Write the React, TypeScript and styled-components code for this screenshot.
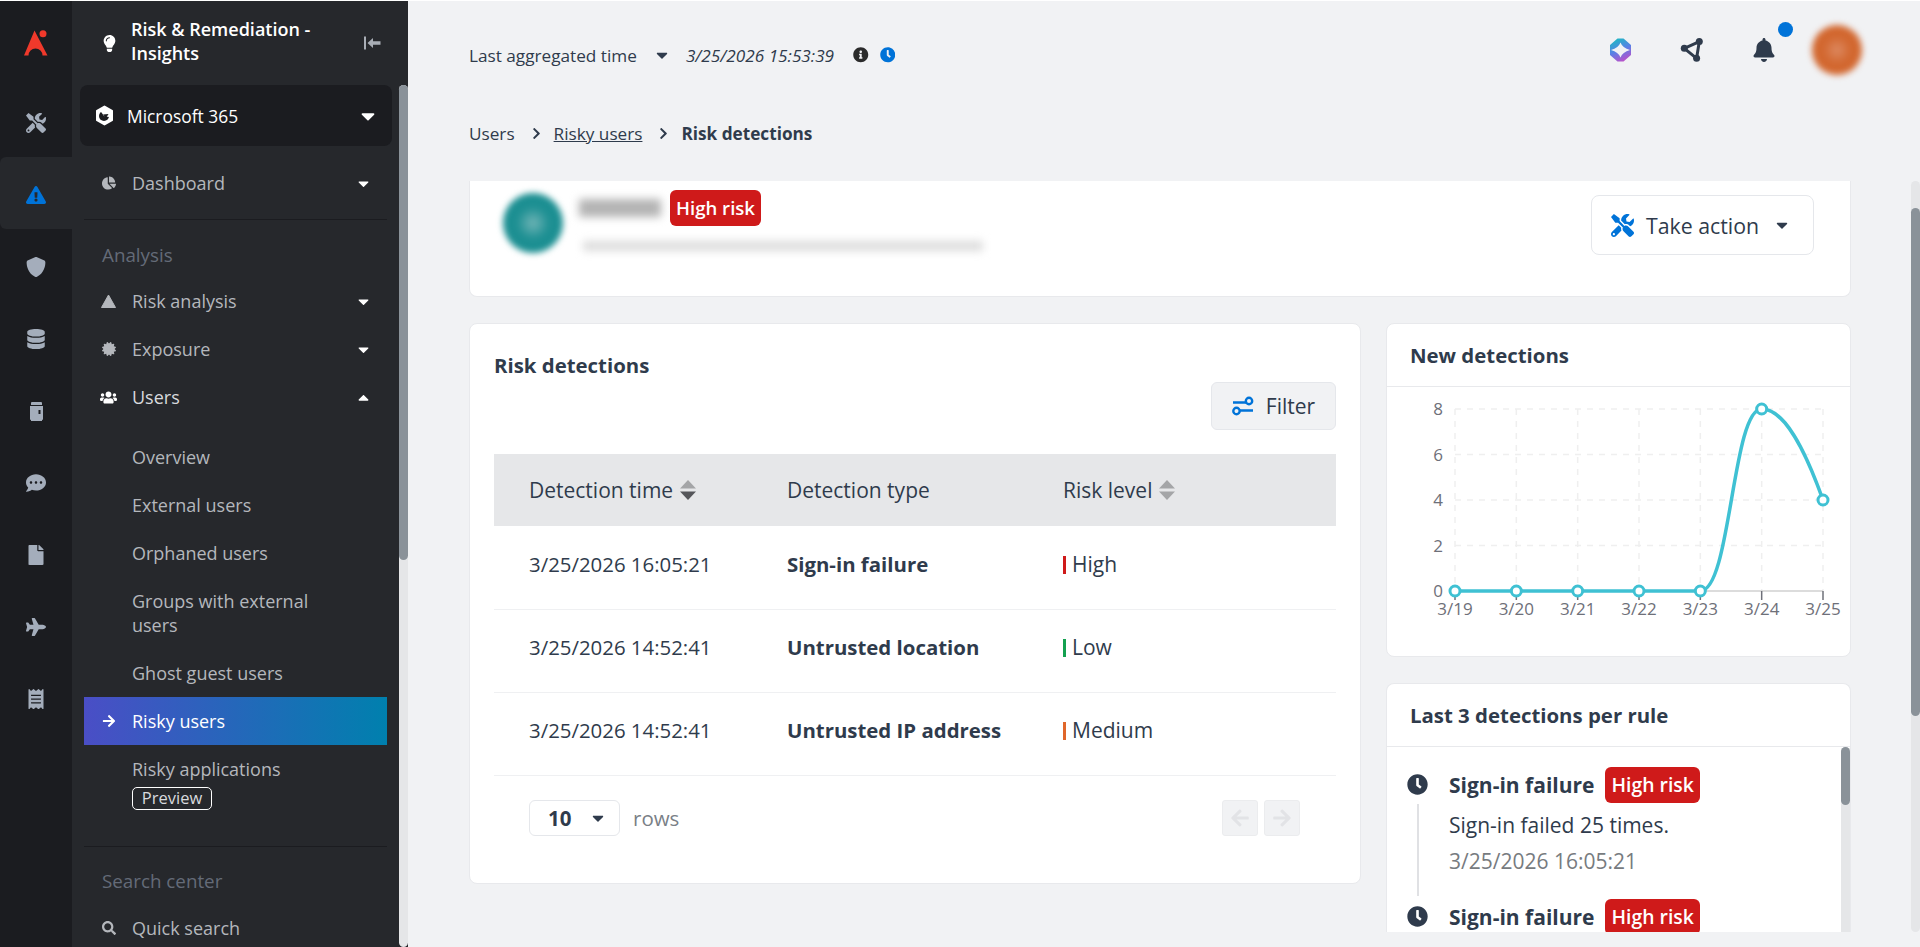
import styled, { createGlobalStyle } from "styled-components";
import {
  FaArrowLeft,
  FaArrowRight,
  FaBell,
  FaCaretDown,
  FaCaretUp,
  FaCertificate,
  FaChartPie,
  FaChevronRight,
  FaClock,
  FaCommentDots,
  FaDatabase,
  FaExclamationTriangle,
  FaFile,
  FaInfoCircle,
  FaLightbulb,
  FaPlane,
  FaReceipt,
  FaSearch,
  FaTools,
  FaUsers,
} from "react-icons/fa";
import { FaShield } from "react-icons/fa6";

const GlobalStyle = createGlobalStyle`
  html, body {
    margin: 0;
    padding: 0;
    height: 100%;
    overflow: hidden;
    background: #fff;
  }
  body {
    font-family: "Open Sans", "Noto Sans", "Liberation Sans", sans-serif;
    color: #2f3b4c;
  }
  * { box-sizing: border-box; }
`;

const Shell = styled.div`
  display: flex;
  height: 947px;
  padding-top: 1px;
`;

/* left icon rail */
const Rail = styled.nav`
  width: 72px;
  flex: none;
  background: #1b1c20;
  display: flex;
  flex-direction: column;
`;

const RailItem = styled.div<{ $active?: boolean }>`
  height: 72px;
  display: flex;
  align-items: center;
  justify-content: center;
  padding-top: 4px;
  color: #a4adbb;
  font-size: 20px;
  background: ${(p) => (p.$active ? "#26282c" : "transparent")};
  border-radius: ${(p) => (p.$active ? "6px 0 0 6px" : "0")};
`;

const RailLogo = styled(RailItem)`
  height: 84px;
  padding-top: 0;
`;

/* sidebar */
const Sidebar = styled.aside`
  width: 336px;
  flex: none;
  background: #26282c;
  display: flex;
  flex-direction: column;
  color: #b4b7bc;
  overflow: hidden;
`;

const SideHead = styled.div`
  height: 84px;
  flex: none;
  display: flex;
  align-items: center;
  padding: 0 26px 0 29px;
  color: #fff;
`;

const SideHeadTitle = styled.div`
  flex: 1;
  margin: -4px 0 0 13px;
  font-size: 18px;
  font-weight: 600;
  line-height: 24px;
`;

const SideBody = styled.div`
  flex: 1;
  display: flex;
  min-height: 0;
`;

const SideScroll = styled.div`
  flex: 1;
  min-width: 0;
  padding: 0 7px 0 8px;
  overflow: hidden;
`;

const ScrollTrack = styled.div<{ $w: number }>`
  width: ${(p) => p.$w}px;
  flex: none;
  background: #e5e6e8;
  border-radius: ${(p) => p.$w / 2}px;
`;

const ScrollThumb = styled.div<{ $top: number; $h: number }>`
  margin-top: ${(p) => p.$top}px;
  height: ${(p) => p.$h}px;
  background: #8a9299;
  border-radius: 5px;
`;

const TenantBox = styled.div`
  height: 61px;
  background: #1b1c20;
  border-radius: 8px;
  display: flex;
  align-items: center;
  padding: 0 13px 0 15px;
  color: #fff;
  font-size: 17.4px;
  margin-bottom: 13px;
`;

const TenantLabel = styled.span`
  flex: 1;
  margin-left: 13px;
`;

const NavGroup = styled.div<{ $border?: boolean }>`
  margin: 0 5px 0 4px;
  border-bottom: 1px solid ${(p) => (p.$border ? "#1b1c20" : "transparent")};
`;

const NavRow = styled.div<{ $light?: boolean; $active?: boolean }>`
  min-height: 48px;
  display: flex;
  align-items: center;
  font-size: 18px;
  line-height: 24px;
  color: ${(p) => (p.$active ? "#fff" : p.$light ? "#d8dade" : "#b4b7bc")};
  background: ${(p) =>
    p.$active ? "linear-gradient(90deg, #4a4ec6 0%, #0080ae 100%)" : "none"};
`;

const NavIcon = styled.span<{ $light?: boolean }>`
  width: 48px;
  flex: none;
  display: flex;
  justify-content: center;
  padding-left: 1px;
  font-size: 14px;
  color: ${(p) => (p.$light ? "#fff" : "#b4b7bc")};
`;

const NavLabel = styled.span`
  flex: 1;
`;

const NavCaret = styled.span`
  flex: none;
  width: 30px;
  margin-right: 9px;
  display: flex;
  justify-content: center;
  color: #fff;
  font-size: 17px;
`;

const NavSub = styled.div`
  padding: 12px 55px 12px 48px;
  font-size: 18px;
  line-height: 24px;
  color: #b4b7bc;
  min-height: 48px;
`;

const NavSubLast = styled(NavSub)`
  padding-bottom: 0;
  padding-right: 8px;
`;

const PreviewTag = styled.span`
  display: block;
  width: 80px;
  height: 23px;
  margin-top: 6px;
  border: 1px solid #fff;
  border-radius: 5px;
  color: #d8dade;
  font-size: 16.5px;
  line-height: 20px;
  text-align: center;
`;

const NavSpacer = styled.div<{ $h: number }>`
  height: ${(p) => p.$h}px;
`;

const NavSection = styled.div<{ $top: number }>`
  height: 57px;
  padding: ${(p) => p.$top}px 0 0 18px;
  font-size: 18.8px;
  line-height: 24px;
  color: #646b78;
`;

/* main column */
const Main = styled.main`
  flex: 1;
  min-width: 0;
  background: #f1f2f4;
  display: flex;
  flex-direction: column;
`;

const TopBar = styled.header`
  height: 108px;
  flex: none;
  display: flex;
  align-items: center;
  justify-content: space-between;
  padding: 0 51px 0 61px;
`;

const Aggregated = styled.div`
  display: flex;
  align-items: center;
  font-size: 17.2px;
  color: #2f3b4c;
`;

const AggCaret = styled.span`
  display: flex;
  margin: 0 15px 0 16px;
  font-size: 18px;
`;

const AggTime = styled.em`
  margin-right: 19px;
`;

const DotIcon = styled.span<{ $color: string }>`
  display: flex;
  margin-right: 11px;
  font-size: 15.5px;
  color: ${(p) => p.$color};
`;

const TopIcons = styled.div`
  display: flex;
  align-items: center;
  margin-bottom: 10px;
  color: #2f3b4c;
`;

const TopIcon = styled.span<{ $gap: number }>`
  display: flex;
  position: relative;
  font-size: 24px;
  margin-right: ${(p) => p.$gap}px;
`;

const BellDot = styled.span`
  position: absolute;
  top: -16px;
  left: 26px;
  width: 15px;
  height: 15px;
  border-radius: 50%;
  background: #0073d8;
`;

const AvatarWrap = styled.div`
  width: 64px;
  height: 56px;
  display: flex;
  align-items: center;
  justify-content: center;
  margin-left: -6px;
`;

const BlurDisc = styled.div<{ $size: number; $color: string; $core: string }>`
  width: ${(p) => p.$size}px;
  height: ${(p) => p.$size}px;
  border-radius: 50%;
  background: radial-gradient(circle, ${(p) => p.$core} 0%, ${(p) => p.$color} 40%);
  filter: blur(3px);
`;

const Crumbs = styled.div`
  height: 72px;
  flex: none;
  display: flex;
  align-items: center;
  padding: 0 0 24px 61px;
  font-size: 17.2px;
  color: #2f3b4c;
`;

const CrumbLink = styled.a`
  color: #2f3b4c;
  text-decoration: underline;
`;

const CrumbSep = styled.span`
  display: flex;
  margin: 0 11px 0 15px;
  font-size: 13px;
`;

const CrumbNow = styled.strong`
  font-weight: 700;
`;

const ContentArea = styled.div`
  height: 751px;
  flex: none;
  display: flex;
  overflow: hidden;
`;

const Content = styled.div`
  flex: 1;
  min-width: 0;
  padding: 0 60px 0 61px;
  overflow: hidden;
`;

const Card = styled.section`
  background: #fff;
  border: 1px solid #e8e9ec;
  border-radius: 8px;
`;

const UserCard = styled(Card)`
  height: 116px;
  border-top: 0;
  border-radius: 0 0 8px 8px;
  display: flex;
  align-items: flex-start;
  padding: 9px 36px 0 30px;
`;

const UserAvatar = styled.div`
  width: 66px;
  height: 66px;
  display: flex;
  align-items: center;
  justify-content: center;
`;

const UserInfo = styled.div`
  flex: 1;
  margin-left: 13px;
`;

const UserNameRow = styled.div`
  display: flex;
  align-items: center;
`;

const BlurBar = styled.div<{ $w: number; $h: number; $color: string }>`
  width: ${(p) => p.$w}px;
  height: ${(p) => p.$h}px;
  background: ${(p) => p.$color};
  filter: blur(4px);
`;

const RiskBadge = styled.span<{ $size: number }>`
  display: inline-block;
  background: #cf1a1a;
  color: #fff;
  font-size: ${(p) => p.$size}px;
  font-weight: 600;
  line-height: 36px;
  height: 36px;
  padding: 0 6px;
  border-radius: 6px;
  white-space: nowrap;
`;

const UserNameBadge = styled(RiskBadge)`
  margin-left: 9px;
`;

const UserMail = styled.div`
  margin: 15px 0 0 4px;
`;

const ActionButton = styled.button`
  margin-top: 5px;
  width: 223px;
  height: 60px;
  display: flex;
  align-items: center;
  padding: 0 19px;
  background: #fff;
  border: 1px solid #e5e7eb;
  border-radius: 8px;
  font: inherit;
  font-size: 21.3px;
  color: #2f3b4c;
`;

const ActionIcon = styled.span`
  display: flex;
  color: #0073d8;
  font-size: 23px;
  margin-right: 12px;
`;

const ActionCaret = styled.span`
  display: flex;
  margin-left: 14px;
  font-size: 18px;
`;

const Columns = styled.div`
  display: grid;
  grid-template-columns: 892px 465px;
  gap: 25px;
  margin-top: 26px;
  align-items: start;
`;

const DetectionsCard = styled(Card)`
  height: 561px;
  padding: 28px 24px 0;
`;

const CardHeading = styled.h2`
  margin: 0;
  font-size: 20.4px;
  line-height: 26px;
  font-weight: 700;
  color: #2f3b4c;
`;

const FilterRow = styled.div`
  display: flex;
  justify-content: flex-end;
  margin-top: 4px;
`;

const FilterButton = styled.button`
  width: 125px;
  height: 48px;
  display: flex;
  align-items: center;
  justify-content: center;
  gap: 12px;
  background: #f1f2f4;
  border: 1px solid #e5e7eb;
  border-radius: 6px;
  font: inherit;
  font-size: 21px;
  color: #2f3b4c;
`;

const Table = styled.table`
  width: 100%;
  margin-top: 24px;
  border-collapse: collapse;
  table-layout: fixed;
  font-size: 21px;
`;

const Th = styled.th<{ $w?: number }>`
  height: 72px;
  background: #e6e7e9;
  text-align: left;
  font-weight: 400;
  padding: 0 0 0 35px;
  width: ${(p) => (p.$w ? `${p.$w}px` : "auto")};
`;

const ThInner = styled.span`
  display: inline-flex;
  align-items: center;
  gap: 6px;
`;

const Td = styled.td<{ $strong?: boolean; $size?: number }>`
  height: 83px;
  padding: 0 0 7px 35px;
  border-bottom: 1px solid #eff0f2;
  font-weight: ${(p) => (p.$strong ? 700 : 400)};
  font-size: ${(p) => p.$size ?? 21}px;
`;

const LevelBar = styled.span<{ $color: string }>`
  display: inline-block;
  width: 3px;
  height: 18px;
  margin-right: 6px;
  vertical-align: -2px;
  background: ${(p) => p.$color};
`;

const TableFoot = styled.div`
  display: flex;
  align-items: center;
  padding: 24px 36px 0 35px;
`;

const RowsSelect = styled.div`
  width: 91px;
  height: 36px;
  display: flex;
  align-items: center;
  padding: 0 12px 0 18px;
  border: 1px solid #e5e7eb;
  border-radius: 6px;
  font-size: 20.5px;
  font-weight: 700;
`;

const RowsValue = styled.span`
  flex: 1;
`;

const RowsCaret = styled.span`
  display: flex;
  font-size: 18px;
`;

const RowsLabel = styled.span`
  flex: 1;
  margin-left: 13px;
  font-size: 20.5px;
  color: #7a7f87;
`;

const PageButton = styled.span`
  width: 36px;
  height: 36px;
  margin-left: 6px;
  display: flex;
  align-items: center;
  justify-content: center;
  background: #f1f2f4;
  border: 1px solid #ebecee;
  border-radius: 3px;
  color: #e2e3e6;
  font-size: 20px;
`;

const SideCards = styled.div`
  display: flex;
  flex-direction: column;
  gap: 26px;
`;

const SideCardHead = styled.div`
  height: 63px;
  padding: 18px 23px 0;
  border-bottom: 1px solid #e8e9ec;
`;

const ChartCard = styled(Card)`
  height: 334px;
`;

const ChartSvg = styled.svg`
  display: block;
`;

const TimelineCard = styled(Card)`
  height: 300px;
  border-bottom: 0;
  border-radius: 8px 8px 0 0;
  display: flex;
  flex-direction: column;
`;

const TimelineBody = styled.div`
  flex: 1;
  display: flex;
  min-height: 0;
  overflow: hidden;
`;

const TimelineList = styled.div`
  flex: 1;
  padding: 27px 0 0 20px;
  overflow: hidden;
`;

const TimelineItem = styled.div`
  display: grid;
  grid-template-columns: 21px 1fr;
  column-gap: 21px;
  height: 132px;
`;

const TimelineMark = styled.div`
  display: flex;
  flex-direction: column;
  align-items: center;
  font-size: 21px;
  color: #2f3b4c;
`;

const TimelineLine = styled.div`
  width: 2px;
  height: 92px;
  margin-top: 9px;
  background: #e0e1e4;
`;

const TimelineTitle = styled.div`
  display: flex;
  align-items: center;
  gap: 11px;
  margin-top: -7px;
  font-size: 21px;
  font-weight: 700;
`;

const TimelineText = styled.div`
  margin-top: 9px;
  font-size: 21px;
  line-height: 26px;
`;

const TimelineDate = styled(TimelineText)`
  margin-top: 10px;
  color: #777b80;
`;

const Logo = () => (
  <svg width="24" height="26" viewBox="0 0 24 26">
    <path d="M10.500 0.500 0 25.500h4.500a7 7 0 0 1 14 0H23.500z" fill="#f0392b" />
    <circle cx="19" cy="3.800" r="3.500" fill="#f0392b" />
  </svg>
);

const HexIcon = () => (
  <svg width="19" height="21" viewBox="0 0 19 21">
    <path
      d="M9.500 1.500 17 5.800v9.400l-7.500 4.300L2 15.200V5.800z"
      fill="#fff"
      stroke="#fff"
      strokeWidth="2"
      strokeLinejoin="round"
    />
    <circle cx="9" cy="11" r="5" fill="#1b1c20" />
    <path d="M9 11 5 5.500h9.500L17 10.500l-3.500 1.500z" fill="#fff" />
    <path d="M8 9.500 13.500 9 11 13z" fill="#1b1c20" />
  </svg>
);

const CollapseIcon = () => (
  <svg width="18" height="14" viewBox="0 0 18 14" fill="#a9aeb6">
    <rect x="0" y="0.500" width="2" height="13" />
    <path d="M3.500 7 9 2v3.200h7.500v3.600H9V12z" />
  </svg>
);

const TriangleIcon = () => (
  <svg width="15" height="14" viewBox="0 0 15 14" fill="#b4b7bc">
    <path d="M7.500 1 14.500 13.500H0.500z" strokeLinejoin="round" stroke="#b4b7bc" />
  </svg>
);

const BookIcon = () => (
  <svg width="13" height="19" viewBox="0 0 13 19" fill="#a4adbb">
    <path d="M2 0h9a1 1 0 0 1 1 1v2H1V1a1 1 0 0 1 1-1z" />
    <path d="M0 4h13v13a1 1 0 0 1-1 1v1H1v-1a1 1 0 0 1-1-1z" />
    <rect x="8.500" y="8" width="2" height="4" fill="#1b1c20" />
  </svg>
);

const StarIcon = () => (
  <svg width="21" height="24" viewBox="0 0 21 24">
    <defs>
      <linearGradient id="starGrad" x1="0.300" y1="0" x2="0.700" y2="1">
        <stop offset="0" stopColor="#1fb8c4" />
        <stop offset="0.500" stopColor="#5a80e6" />
        <stop offset="1" stopColor="#c04fc8" />
      </linearGradient>
    </defs>
    <path
      fill="url(#starGrad)"
      fillRule="evenodd"
      d="M7.500 0.500h6L21 7v10l-7.500 6.500h-6L0 17V7zM10.500 4.500Q12.500 10 20 12 12.500 14 10.500 19.500 8.500 14 1 12 8.500 10 10.500 4.500z"
    />
  </svg>
);

const GraphIcon = () => (
  <svg width="24" height="24" viewBox="0 0 24 24" fill="none" stroke="#2f3b4c" strokeWidth="3">
    <path d="M4.300 10.300 19.300 3.600 16.600 20.300z" strokeLinejoin="round" />
    <circle cx="4.300" cy="10.300" r="3.500" fill="#2f3b4c" stroke="none" />
    <circle cx="19.300" cy="3.600" r="3.500" fill="#2f3b4c" stroke="none" />
    <circle cx="16.600" cy="20.300" r="3.500" fill="#2f3b4c" stroke="none" />
  </svg>
);

const FilterIcon = () => (
  <svg width="22" height="20" viewBox="0 0 22 20" fill="none" stroke="#0073d8" strokeWidth="2.400">
    <path d="M1 6.500h13M8 14.500h13" />
    <circle cx="17" cy="5" r="3.200" />
    <circle cx="4.500" cy="15" r="3.200" />
  </svg>
);

const SortIcon = ({ active }: { active?: boolean }) => (
  <svg width="18" height="22" viewBox="0 0 18 22">
    <path d="M9 1 17 9.500H1z" fill="#a4a5a7" />
    <path d="M9 21 1 12.500h16z" fill={active ? "#55565a" : "#a4a5a7"} />
  </svg>
);

const chartX = [68, 129.330, 190.670, 252, 313.330, 374.670, 436];
const chartY = [22, 67.500, 113, 158.500, 204];

const DetectionChart = () => (
  <ChartSvg width="463" height="270" viewBox="0 0 463 270">
    {chartY.slice(0, 4).map((y) => (
      <line key={y} x1="68" x2="436" y1={y} y2={y} stroke="#efefef" strokeWidth="1.500" strokeDasharray="6 6" />
    ))}
    {chartX.map((x) => (
      <line key={x} x1={x} x2={x} y1="22" y2="204" stroke="#efefef" strokeWidth="1.500" strokeDasharray="6 6" />
    ))}
    <line x1="68" x2="436" y1="204" y2="204" stroke="#dcdcdc" strokeWidth="2" />
    {chartX.map((x) => (
      <line key={x} x1={x} x2={x} y1="204" y2="213" stroke="#6e7079" strokeWidth="1.500" />
    ))}
    {["8", "6", "4", "2", "0"].map((t, i) => (
      <text key={t} x="56" y={chartY[i] + 6} textAnchor="end" fontSize="17" fill="#6e7079">
        {t}
      </text>
    ))}
    {["3/19", "3/20", "3/21", "3/22", "3/23", "3/24", "3/25"].map((t, i) => (
      <text key={t} x={chartX[i]} y="228" textAnchor="middle" fontSize="17" fill="#6e7079">
        {t}
      </text>
    ))}
    <path
      d="M68 204H313.330C344 204 345 22 374.670 22C397 22 417 60 436 113"
      fill="none"
      stroke="#3fc1d3"
      strokeWidth="3.500"
    />
    {[204, 204, 204, 204, 204, 22, 113].map((y, i) => (
      <circle key={i} cx={chartX[i]} cy={y} r="5" fill="#fff" stroke="#3fc1d3" strokeWidth="3" />
    ))}
  </ChartSvg>
);

const detections = [
  { time: "3/25/2026 16:05:21", type: "Sign-in failure", level: "High", color: "#cf1a1a" },
  { time: "3/25/2026 14:52:41", type: "Untrusted location", level: "Low", color: "#14a150" },
  { time: "3/25/2026 14:52:41", type: "Untrusted IP address", level: "Medium", color: "#e0662a" },
];

const subItems = [
  "Overview",
  "External users",
  "Orphaned users",
  "Groups with external users",
  "Ghost guest users",
];

const App = () => {
  return (
    <>
      <GlobalStyle />
      <Shell>
        <Rail>
          <RailLogo>
            <Logo />
          </RailLogo>
          <RailItem>
            <FaTools />
          </RailItem>
          <RailItem $active>
            <FaExclamationTriangle color="#0073d8" />
          </RailItem>
          <RailItem>
            <FaShield />
          </RailItem>
          <RailItem>
            <FaDatabase />
          </RailItem>
          <RailItem>
            <BookIcon />
          </RailItem>
          <RailItem>
            <FaCommentDots />
          </RailItem>
          <RailItem>
            <FaFile />
          </RailItem>
          <RailItem>
            <FaPlane />
          </RailItem>
          <RailItem>
            <FaReceipt />
          </RailItem>
        </Rail>

        <Sidebar>
          <SideHead>
            <FaLightbulb size={17} />
            <SideHeadTitle>Risk &amp; Remediation - Insights</SideHeadTitle>
            <CollapseIcon />
          </SideHead>
          <SideBody>
            <SideScroll>
              <TenantBox>
                <HexIcon />
                <TenantLabel>Microsoft 365</TenantLabel>
                <FaCaretDown size={22} />
              </TenantBox>
              <NavGroup $border>
                <NavRow>
                  <NavIcon>
                    <FaChartPie />
                  </NavIcon>
                  <NavLabel>Dashboard</NavLabel>
                  <NavCaret>
                    <FaCaretDown />
                  </NavCaret>
                </NavRow>
                <NavSpacer $h={12} />
              </NavGroup>
              <NavGroup>
                <NavSection $top={23}>Analysis</NavSection>
                <NavRow>
                  <NavIcon>
                    <TriangleIcon />
                  </NavIcon>
                  <NavLabel>Risk analysis</NavLabel>
                  <NavCaret>
                    <FaCaretDown />
                  </NavCaret>
                </NavRow>
                <NavRow>
                  <NavIcon>
                    <FaCertificate />
                  </NavIcon>
                  <NavLabel>Exposure</NavLabel>
                  <NavCaret>
                    <FaCaretDown />
                  </NavCaret>
                </NavRow>
                <NavRow $light>
                  <NavIcon $light>
                    <FaUsers size={17} />
                  </NavIcon>
                  <NavLabel>Users</NavLabel>
                  <NavCaret>
                    <FaCaretUp />
                  </NavCaret>
                </NavRow>
                <NavSpacer $h={12} />
                {subItems.map((s) => (
                  <NavSub key={s}>{s}</NavSub>
                ))}
                <NavRow $active>
                  <NavIcon $light>
                    <FaArrowRight />
                  </NavIcon>
                  <NavLabel>Risky users</NavLabel>
                </NavRow>
                <NavSubLast>
                  Risky applications
                  <PreviewTag>Preview</PreviewTag>
                </NavSubLast>
              </NavGroup>
              <NavGroup $border>
                <NavSpacer $h={35} />
              </NavGroup>
              <NavGroup>
                <NavSection $top={22}>Search center</NavSection>
                <NavRow>
                  <NavIcon>
                    <FaSearch />
                  </NavIcon>
                  <NavLabel>Quick search</NavLabel>
                </NavRow>
              </NavGroup>
            </SideScroll>
            <ScrollTrack $w={9}>
              <ScrollThumb $top={0} $h={475} />
            </ScrollTrack>
          </SideBody>
        </Sidebar>

        <Main>
          <TopBar>
            <Aggregated>
              Last aggregated time
              <AggCaret>
                <FaCaretDown />
              </AggCaret>
              <AggTime>3/25/2026 15:53:39</AggTime>
              <DotIcon $color="#2b2b2b">
                <FaInfoCircle />
              </DotIcon>
              <DotIcon $color="#0073d8">
                <FaClock />
              </DotIcon>
            </Aggregated>
            <TopIcons>
              <TopIcon $gap={49}>
                <StarIcon />
              </TopIcon>
              <TopIcon $gap={48}>
                <GraphIcon />
              </TopIcon>
              <TopIcon $gap={35}>
                <FaBell />
                <BellDot />
              </TopIcon>
              <AvatarWrap>
                <BlurDisc $size={50} $color="#d2672f" $core="#dd8a62" />
              </AvatarWrap>
            </TopIcons>
          </TopBar>

          <Crumbs>
            Users
            <CrumbSep>
              <FaChevronRight />
            </CrumbSep>
            <CrumbLink>Risky users</CrumbLink>
            <CrumbSep>
              <FaChevronRight />
            </CrumbSep>
            <CrumbNow>Risk detections</CrumbNow>
          </Crumbs>

          <ContentArea>
            <Content>
              <UserCard>
                <UserAvatar>
                  <BlurDisc $size={60} $color="#1c8f92" $core="#6fb4b6" />
                </UserAvatar>
                <UserInfo>
                  <UserNameRow>
                    <BlurBar $w={82} $h={18} $color="#b4b4b4" />
                    <UserNameBadge $size={18.6}>High risk</UserNameBadge>
                  </UserNameRow>
                  <UserMail>
                    <BlurBar $w={400} $h={10} $color="#dcdcdc" />
                  </UserMail>
                </UserInfo>
                <ActionButton>
                  <ActionIcon>
                    <FaTools />
                  </ActionIcon>
                  Take action
                  <ActionCaret>
                    <FaCaretDown />
                  </ActionCaret>
                </ActionButton>
              </UserCard>

              <Columns>
                <DetectionsCard>
                  <CardHeading>Risk detections</CardHeading>
                  <FilterRow>
                    <FilterButton>
                      <FilterIcon />
                      Filter
                    </FilterButton>
                  </FilterRow>
                  <Table>
                    <thead>
                      <tr>
                        <Th $w={258}>
                          <ThInner>
                            Detection time
                            <SortIcon active />
                          </ThInner>
                        </Th>
                        <Th $w={276}>Detection type</Th>
                        <Th>
                          <ThInner>
                            Risk level
                            <SortIcon />
                          </ThInner>
                        </Th>
                      </tr>
                    </thead>
                    <tbody>
                      {detections.map((d) => (
                        <tr key={d.type}>
                          <Td $size={20.4}>{d.time}</Td>
                          <Td $strong $size={20.4}>
                            {d.type}
                          </Td>
                          <Td>
                            <LevelBar $color={d.color} />
                            {d.level}
                          </Td>
                        </tr>
                      ))}
                    </tbody>
                  </Table>
                  <TableFoot>
                    <RowsSelect>
                      <RowsValue>10</RowsValue>
                      <RowsCaret>
                        <FaCaretDown />
                      </RowsCaret>
                    </RowsSelect>
                    <RowsLabel>rows</RowsLabel>
                    <PageButton>
                      <FaArrowLeft />
                    </PageButton>
                    <PageButton>
                      <FaArrowRight />
                    </PageButton>
                  </TableFoot>
                </DetectionsCard>

                <SideCards>
                  <ChartCard>
                    <SideCardHead>
                      <CardHeading>New detections</CardHeading>
                    </SideCardHead>
                    <DetectionChart />
                  </ChartCard>
                  <TimelineCard>
                    <SideCardHead>
                      <CardHeading>Last 3 detections per rule</CardHeading>
                    </SideCardHead>
                    <TimelineBody>
                      <TimelineList>
                        <TimelineItem>
                          <TimelineMark>
                            <FaClock />
                            <TimelineLine />
                          </TimelineMark>
                          <div>
                            <TimelineTitle>
                              Sign-in failure
                              <RiskBadge $size={19.4}>High risk</RiskBadge>
                            </TimelineTitle>
                            <TimelineText>Sign-in failed 25 times.</TimelineText>
                            <TimelineDate>3/25/2026 16:05:21</TimelineDate>
                          </div>
                        </TimelineItem>
                        <TimelineItem>
                          <TimelineMark>
                            <FaClock />
                          </TimelineMark>
                          <div>
                            <TimelineTitle>
                              Sign-in failure
                              <RiskBadge $size={19.4}>High risk</RiskBadge>
                            </TimelineTitle>
                          </div>
                        </TimelineItem>
                      </TimelineList>
                      <ScrollTrack $w={9}>
                        <ScrollThumb $top={0} $h={58} />
                      </ScrollTrack>
                    </TimelineBody>
                  </TimelineCard>
                </SideCards>
              </Columns>
            </Content>
            <ScrollTrack $w={9}>
              <ScrollThumb $top={27} $h={508} />
            </ScrollTrack>
          </ContentArea>
        </Main>
      </Shell>
    </>
  );
};

export default App;
